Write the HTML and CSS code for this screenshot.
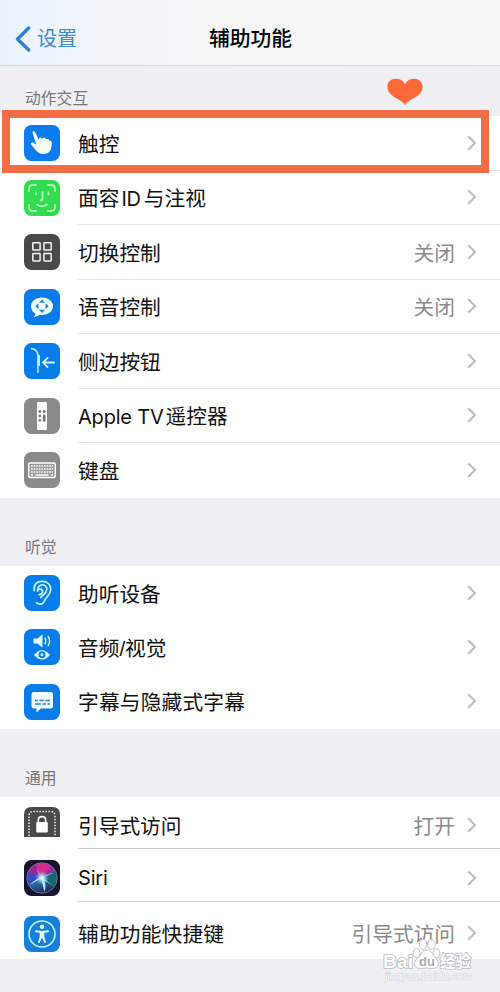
FILE: index.html
```
<!DOCTYPE html>
<html lang="zh-CN">
<head>
<meta charset="utf-8">
<title>辅助功能</title>
<link rel="stylesheet" href="styles.css">
</head>
<body>
<svg class="defs" aria-hidden="true">
  <defs>
    <symbol id="chev" viewBox="0 0 10 16"><path d="M1.2 1.2 8 8 1.2 14.8" fill="none" stroke="#bcbcc0" stroke-width="2.1"/></symbol>
  </defs>
</svg>
<header class="nav">
  <a class="back"><svg width="16" height="26" viewBox="0 0 16 26"><path d="M13.7 2 2.500 13 13.7 24" fill="none" stroke="#2c7fd2" stroke-width="3.300" stroke-linecap="round" stroke-linejoin="round"/></svg><span>设置</span></a>
  <h1>辅助功能</h1>
</header>
<main>
  <section class="motion">
    <h2>动作交互</h2>
    <svg class="heart" width="38" height="28" viewBox="0 0 38 28"><path d="M19 27C16.500 22.500 10 21 5 16.500C-1 11 .5 1 9.500 .8C14 .8 17 2.500 19 6C21 2.500 24 .8 28.500 .8C37.500 1 39 11 33 16.500C28 21 21.500 22.500 19 27Z" fill="#fb6a38"/></svg>
    <ul>
      <li>
        <svg class="icon" viewBox="0 0 36 36"><rect width="36" height="36" rx="7.500" fill="#0b7bee"/><path d="M8.600 8c-.6-1.800 1.700-2.500 2.500-.8l3.600 7.300c.1-2.700 3.100-2.700 3.600-.5.700-1.800 3.300-1.500 3.600.6 1-1.500 3.100-.7 3.300 1.100 1.300-.8 2.600.4 2.600 2.300 0 6.600-2.300 11-8.300 11-4 0-6-1.700-8.100-4.200l-4-4.800c-1.300-1.700.3-3.200 2.100-2.300l2.700 1.700z" fill="#f7fbf8"/></svg>
        <div class="cell"><span>触控</span><svg class="chev"><use href="#chev"/></svg></div>
      </li>
      <li>
        <svg class="icon" viewBox="0 0 36 36"><rect width="36" height="36" rx="7.500" fill="#31dd4f"/><g fill="none" stroke="#b2ffb5" stroke-width="1.800" stroke-linecap="round"><path d="M5 11V9q0-4 4-4h3M24 5h3q4 0 4 4v2M31 25v2q0 4-4 4h-3M12 31H9q-4 0-4-4v-2M12 12.500v2M24.500 12.500v2M18.500 12v7q0 1.500-2 1.500M13 24.500q5 3.500 10 0"/></g></svg>
        <div class="cell"><span>面容<span class="latin id">ID</span>与注视</span><svg class="chev"><use href="#chev"/></svg></div>
      </li>
      <li>
        <svg class="icon" viewBox="0 0 36 36"><rect width="36" height="36" rx="7.500" fill="#4a4949"/><g fill="none" stroke="#f3f3f3" stroke-width="1.500"><rect x="8.800" y="8.800" width="7.300" height="7.300" rx=".6"/><rect x="19.900" y="8.800" width="7.300" height="7.300" rx=".6"/><rect x="8.800" y="19.600" width="7.300" height="7.300" rx=".6"/><rect x="19.900" y="19.600" width="7.300" height="7.300" rx=".6"/></g></svg>
        <div class="cell"><span>切换控制</span><em>关闭</em><svg class="chev"><use href="#chev"/></svg></div>
      </li>
      <li>
        <svg class="icon" viewBox="0 0 36 36"><rect width="36" height="36" rx="7.500" fill="#087ce9"/><path d="M18 8.500c6.300 0 11 3.600 11 8.800s-4.700 8.700-11 8.700c-1 0-1.800-.1-2.600-.2-1.600 1.400-3.600 2.300-5.900 2.200 1.300-1 1.900-2.100 2-3.300C8.700 23.200 7 20.600 7 17.300c0-5.200 4.700-8.800 11-8.800Z" fill="#ebfffb"/><path d="m18 10.500 3 3.200h-6zM18 24l3-3.200h-6zM11.300 17.300l3.200-3v6zM24.700 17.300l-3.200-3v6z" fill="#347fae"/></svg>
        <div class="cell"><span>语音控制</span><em>关闭</em><svg class="chev"><use href="#chev"/></svg></div>
      </li>
      <li>
        <svg class="icon" viewBox="0 0 36 36"><rect width="36" height="36" rx="7.500" fill="#087ce9"/><path d="M7 5.500C11.500 6 14 8 14 13v17" fill="none" stroke="#b9f2ff" stroke-width="1.500"/><path d="M14.700 12v11" stroke="#b9f2ff" stroke-width="2.600"/><path d="M30 19.500H19M23.500 15l-4.500 4.500 4.500 4.500" fill="none" stroke="#cff9ff" stroke-width="1.800" stroke-linecap="round"/></svg>
        <div class="cell"><span>侧边按钮</span><svg class="chev"><use href="#chev"/></svg></div>
      </li>
      <li>
        <svg class="icon" viewBox="0 0 36 36"><rect width="36" height="36" rx="7.500" fill="#8a8a8b"/><rect x="13" y="4" width="10" height="28" rx="1.300" fill="#fff"/><g fill="#777"><circle cx="15.800" cy="13.500" r="1.400"/><circle cx="20.200" cy="13.500" r="1.400"/><circle cx="15.800" cy="18" r="1.400"/><circle cx="15.800" cy="22.300" r="1.400"/><rect x="18.800" y="16.600" width="2.800" height="7.200" rx="1.300"/></g></svg>
        <div class="cell"><span><span class="latin tv">Apple TV</span>遥控器</span><svg class="chev"><use href="#chev"/></svg></div>
      </li>
      <li>
        <svg class="icon" viewBox="0 0 36 36"><rect width="36" height="36" rx="7.500" fill="#8a8a8b"/><rect x="4.700" y="11" width="26.600" height="14.500" rx="1.500" fill="#999" stroke="#fff" stroke-width="1.400"/><path d="M7 14h22M7 17h22M7 20h22" stroke="#fff" stroke-width="1.500" stroke-dasharray="1.700 .9"/><path d="M7 23h2m2.500 0h13m2.500 0h2" stroke="#fff" stroke-width="1.400"/></svg>
        <div class="cell"><span>键盘</span><svg class="chev"><use href="#chev"/></svg></div>
      </li>
    </ul>
    <div class="frame"></div>
  </section>
  <section class="hearing">
    <h2>听觉</h2>
    <ul>
      <li>
        <svg class="icon" viewBox="0 0 36 36"><rect width="36" height="36" rx="7.500" fill="#087ce9"/><g fill="none" stroke="#b5f3ff" stroke-width="1.800" stroke-linecap="round"><path d="M10.200 15.500C9.400 9 13 6.400 18 6.400c5.500 0 8.700 3.200 8.700 8.100 0 5.800-4.500 6.700-5.800 10.600-1 3.500-4.500 5.500-8.200 2.600"/><path d="M13.600 16c-.3-8.200 9.500-7.500 9.200-1.500-.2 4-4.100 5.300-5.900 8M13.600 16c.7-2.700 5-2.300 5 .5 0 2-1.700 3-3.600 3.200"/></g></svg>
        <div class="cell"><span>助听设备</span><svg class="chev"><use href="#chev"/></svg></div>
      </li>
      <li>
        <svg class="icon" viewBox="0 0 36 36"><rect width="36" height="36" rx="7.500" fill="#087ce9"/><path d="M9.500 9.500h4l5-4.300v13.600l-5-4.300h-4z" fill="#dcfcff"/><path d="M21 9.200q1.700 2.800 0 5.600M24.200 7.500q2.800 4.500 0 9" fill="none" stroke="#c7f6ff" stroke-width="1.500" stroke-linecap="round"/><path d="M10 26Q18 16.500 26 26 18 35 10 26Z" fill="#dcfcff"/><circle cx="18" cy="25.700" r="3.500" fill="#087ce9"/><circle cx="18" cy="25.700" r="1.500" fill="#dcfcff"/></svg>
        <div class="cell"><span>音频/视觉</span><svg class="chev"><use href="#chev"/></svg></div>
      </li>
      <li>
        <svg class="icon" viewBox="0 0 36 36"><rect width="36" height="36" rx="7.500" fill="#087ce9"/><path d="M9.700 8h17q2.300 0 2.300 2.300v12q0 2.200-2.300 2.200H17l-4.500 4v-4H9.700q-2.200 0-2.200-2.200v-12Q7.500 8 9.700 8Z" fill="#efffff"/><path d="M11 16.500h3m1.500 0h4.300m1.500 0H26M11 20h5.800m1.700 0H22m1.500 0H26" stroke="#3186c3" stroke-width="1.400"/></svg>
        <div class="cell"><span class="wide">字幕与隐藏式字幕</span><svg class="chev"><use href="#chev"/></svg></div>
      </li>
    </ul>
  </section>
  <section class="general">
    <h2>通用</h2>
    <ul>
      <li>
        <svg class="icon" viewBox="0 0 36 36"><path d="M0 33V10.500Q0 3 7.500 3h21Q36 3 36 10.500V33Z" fill="#4a4949"/><path d="M5 32V12q0-4.500 4.500-4.500h17Q31 7.500 31 12v20" fill="none" stroke="#eee" stroke-width="1.500" stroke-dasharray="1.500 1.500"/><rect x="12.200" y="18" width="11.600" height="10.500" rx="1" fill="#fff"/><path d="M14.300 18v-1.800c0-4.700 7.400-4.700 7.400 0V18" fill="none" stroke="#fff" stroke-width="1.700"/></svg>
        <div class="cell"><span>引导式访问</span><em>打开</em><svg class="chev"><use href="#chev"/></svg></div>
      </li>
      <li>
        <svg class="icon" viewBox="0 0 36 36">
          <defs>
            <linearGradient id="orb" x1=".3" y1="0" x2=".7" y2="1"><stop offset="0" stop-color="#a11c8c"/><stop offset=".42" stop-color="#8c359d"/><stop offset=".55" stop-color="#2e6fa0"/><stop offset="1" stop-color="#1d2055"/></linearGradient>
            <radialGradient id="glow"><stop offset="0" stop-color="#fff"/><stop offset=".3" stop-color="#bff4ff" stop-opacity=".85"/><stop offset="1" stop-color="#6de" stop-opacity="0"/></radialGradient>
          </defs>
          <rect width="36" height="36" rx="7.500" fill="#17142f"/><circle cx="18" cy="18" r="15.200" fill="url(#orb)" stroke="#8b81a5" stroke-width=".8"/>
          <path d="M18 18 4 12q-2 8 2 14Z" fill="#354cc5"/><path d="m18 18 14-7q2 10-3 16Z" fill="#116a6f"/><path d="m18 18 9-12q-7-5-15-1Z" fill="#d52a92"/><path d="M18 18 5.500 25Q13 18 18 17ZM17 18l3.500 14q2.500-8-1.500-14ZM18 17l11 9q-4-3-11-7Z" fill="#a8edff"/><path d="M18 18 30 13q-7 0-12 5ZM18 18 13 8q0 6 5 10Z" fill="#e79be0" opacity=".7"/><circle cx="18" cy="18" r="7" fill="url(#glow)"/>
        </svg>
        <div class="cell"><span class="latin">Siri</span><svg class="chev"><use href="#chev"/></svg></div>
      </li>
      <li>
        <svg class="icon" viewBox="0 0 36 36"><rect width="36" height="36" rx="7.500" fill="#1680d8"/><circle cx="18" cy="18" r="13" fill="none" stroke="#bdf5ff" stroke-width="1.600"/><circle cx="18" cy="10.800" r="2.200" fill="#e5ffff"/><path d="M12 15.200 18 16l6-.8" fill="none" stroke="#e5ffff" stroke-width="2" stroke-linecap="round"/><path d="M15.700 15.500h4.600v5l1.700 6.300h-1.700L18 21.500l-2.300 5.300H14l1.700-6.300z" fill="#e5ffff"/></svg>
        <div class="cell"><span class="wide">辅助功能快捷键</span><em>引导式访问</em><svg class="chev"><use href="#chev"/></svg></div>
      </li>
    </ul>
  </section>
</main>
<svg class="watermark" width="96" height="50" viewBox="0 0 96 50">
  <g fill="#fff" stroke="#c5c5c9" stroke-width="1"><ellipse cx="36.500" cy="19" rx="3.400" ry="4.500"/><ellipse cx="43" cy="10.500" rx="3.700" ry="5"/><ellipse cx="51.500" cy="10.500" rx="3.700" ry="5"/><ellipse cx="56.500" cy="19.500" rx="3.400" ry="4.500"/><path d="M46.500 16c5 0 6 5 9 8 5 5 3 11-3 10.500q-6-1-12 0c-6 .5-8-5.500-3-10.500 4-3 4-8 9-8Z"/></g>
  <g class="mark"><text x="3" y="34" font-size="19" textLength="30">Bai</text><text x="60" y="33" font-size="15.500" textLength="31">经验</text></g>
  <text class="du" x="39" y="32" font-size="13">du</text>
  <text class="site" x="5" y="46" font-size="11" textLength="87">jingyan.baidu.com</text>
</svg>
</body>
</html>
```
FILE: styles.css
```
* { box-sizing: border-box; }

body {
  margin: 0;
  position: relative;
  height: 992px;
  overflow: hidden;
  background: #efeff4;
  color: #111;
  font-family: "Liberation Sans", "Noto Sans CJK SC", sans-serif;
  font-size: 20.7px;
  text-autospace: no-autospace;
}

.defs { position: absolute; width: 0; height: 0; }

.nav {
  height: 66px;
  padding: 13px 14px 0 15px;
  display: grid;
  grid-template-columns: 1fr auto 1fr;
  align-items: center;
  background: linear-gradient(90deg, #eaf3fd, #f6f6f7 38%, #f8f8f8);
  border-bottom: 1.5px solid #d6d6da;
}

.back { display: flex; align-items: center; gap: 6px; color: #3c8ac6; font-size: 20px; }
.back span { line-height: 28px; }

h1 { margin: 0; font-size: 20.8px; font-weight: 500; line-height: 28px; color: #000; }

section { position: relative; }

h2 {
  margin: 0;
  padding: 21.5px 0 0 25px;
  height: 50px;
  font-size: 15.8px;
  line-height: 22px;
  font-weight: 400;
  color: #77777b;
}

.hearing h2 { height: 68.5px; padding-top: 39px; }
.general h2 { height: 68.5px; padding-top: 39px; }

ul { margin: 0; padding: 0; list-style: none; background: #fff; }

li { display: flex; height: 54.5px; padding-left: 24px; align-items: center; gap: 18px; }

.icon { width: 36px; height: 36px; flex: none; }

.cell {
  flex: 1;
  height: 100%;
  display: flex;
  align-items: center;
  padding-right: 23px;
  border-bottom: 1px solid #e3e3e5;
}
li:last-child .cell { border-bottom-color: transparent; }

.hearing li { height: 54.3px; }
.hearing .cell { border-bottom-color: transparent; }

.general li { height: 53px; }
.general li:first-child { height: 51.5px; }
.general li:last-child { height: 57.5px; }
.general .icon { margin-top: 6px; }
.general li:first-child .icon { margin-top: -3px; }
.general .cell { border-bottom-color: #cfcfd1; padding-top: 6px; }
.general li:first-child .cell { padding-top: 4px; }

.cell span { white-space: nowrap; }
.cell .wide { letter-spacing: 0.2px; }
.cell .latin { font-family: Inter, "Liberation Sans", sans-serif; font-size: 20px; letter-spacing: -0.2px; }
.cell .id { margin: 0 3px 0 2px; }
.cell .tv { margin-right: 2px; }
.cell em { margin-left: auto; margin-right: 12px; font-style: normal; color: #8b8b8e; }
.chev { width: 10px; height: 16px; flex: none; }
.cell > span + .chev { margin-left: auto; }

.heart { position: absolute; left: 386px; top: 12px; }

.frame {
  position: absolute;
  left: 2px;
  top: 44px;
  width: 487px;
  height: 63px;
  border: 8px solid #f26d44;
}

.watermark { position: absolute; left: 380px; top: 934px; }
.mark { font-weight: 700; fill: #fff; stroke: #bdbdc1; stroke-width: 1.6px; paint-order: stroke; }
.du { font-weight: 700; fill: #aaaab0; }
.site { fill: #f9f9fb; stroke: #d3d3d8; stroke-width: 1px; paint-order: stroke; }
```
